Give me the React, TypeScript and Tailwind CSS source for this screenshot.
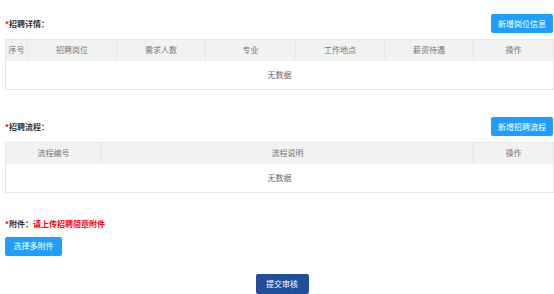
import React from "react";

const font = { fontFamily: '"Noto Sans CJK SC", "Noto Sans", sans-serif' };

const cellHead =
  "h-[21px] border-r border-[#e6e6e6] text-center text-[8px] font-normal text-[#777] last:border-r-0";

function SectionHeader({ title, action }: { title: string; action: string }) {
  return (
    <div className="flex h-[19px] items-center justify-between">
      <div className="text-[8px] font-bold text-[#333]">
        <span className="text-[#ff0000]">*</span>
        {title}
      </div>
      <button className="h-[19px] w-[62px] rounded-[2px] bg-[#1e9fff] text-[8px] text-white">
        {action}
      </button>
    </div>
  );
}

function EmptyTable({ cols }: { cols: { label: string; w: number }[] }) {
  return (
    <table className="mt-[6px] w-full table-fixed border-collapse border border-[#e6e6e6]">
      <colgroup>
        {cols.map((c) => (
          <col key={c.label} style={{ width: c.w }} />
        ))}
      </colgroup>
      <thead>
        <tr className="bg-[#f2f2f2]">
          {cols.map((c) => (
            <th key={c.label} className={cellHead}>
              {c.label}
            </th>
          ))}
        </tr>
      </thead>
      <tbody>
        <tr>
          <td
            colSpan={cols.length}
            className="h-[29px] text-center text-[8px] text-[#666]"
          >
            无数据
          </td>
        </tr>
      </tbody>
    </table>
  );
}

export default function App() {
  return (
    <div className="h-[294px] w-[554px] bg-white pl-[5px] pr-[1px]" style={font}>
      <div className="pt-[14px]">
        <SectionHeader title="招聘详情：" action="新增岗位信息" />
        <EmptyTable
          cols={[
            { label: "序号", w: 22 },
            { label: "招聘岗位", w: 89 },
            { label: "需求人数", w: 89 },
            { label: "专业", w: 90 },
            { label: "工作地点", w: 89 },
            { label: "薪资待遇", w: 89 },
            { label: "操作", w: 80 },
          ]}
        />
      </div>

      <div className="pt-[27px]">
        <SectionHeader title="招聘流程：" action="新增招聘流程" />
        <EmptyTable
          cols={[
            { label: "流程编号", w: 96 },
            { label: "流程说明", w: 372 },
            { label: "操作", w: 80 },
          ]}
        />
      </div>

      <div className="pt-[25px]">
        <div className="text-[8px] font-bold leading-[12px] text-[#333]">
          <span className="text-[#ff0000]">*</span>附件：
          <span className="text-[#ff0000]">请上传招聘简章附件</span>
        </div>
        <button className="mt-[3px] h-[19px] w-[57px] rounded-[2px] bg-[#1e9fff] text-[8px] text-white">
          选择多附件
        </button>
      </div>

      <div className="flex justify-center pl-[6px] pt-[18px]">
        <button className="h-[20px] w-[53px] rounded-[2px] bg-[#1f4e9a] text-[8px] text-white">
          提交审核
        </button>
      </div>
    </div>
  );
}
